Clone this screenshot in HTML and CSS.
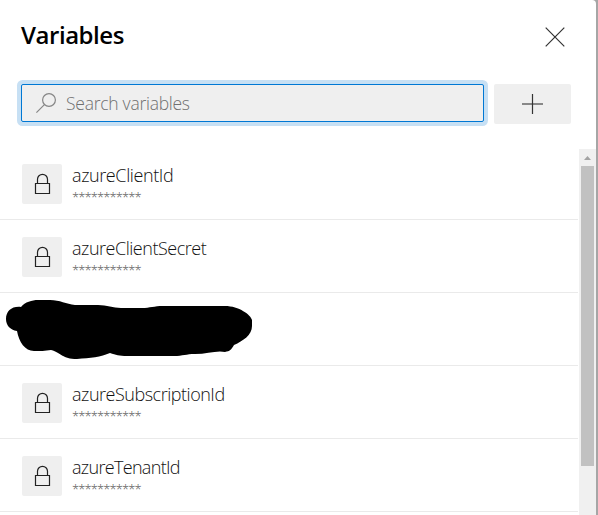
FILE: index.html
```html
<!DOCTYPE html>
<html lang="en">
<head>
<meta charset="utf-8">
<title>Variables</title>
<link rel="stylesheet" href="styles.css">
</head>
<body>
<svg class="sprite" width="0" height="0">
  <symbol id="lock" viewBox="0 0 40 40"><path d="M13.5 19.5h14v10h-14zM15.5 19.5v-4.2a5 5 0 0 1 10 0v4.2"/></symbol>
</svg>
<main class="panel">
  <header class="header">
    <h1 class="title"><span>Variables</span></h1>
    <svg class="close" width="20" height="20" viewBox="0 0 20 20"><path d="M.7.7l18.6 18.6M19.3.7L.7 19.3"/></svg>
  </header>
  <div class="toolbar">
    <div class="search">
      <svg width="20" height="20" viewBox="0 0 20 20"><circle cx="13" cy="7" r="6.4"/><path d="M8.4 11.6L.4 19.6"/></svg>
      <span class="placeholder">Search variables</span>
    </div>
    <div class="add"><svg width="21" height="20" viewBox="0 0 21 20"><path class="across" d="M0 10h21"/><path d="M10.5 0v20"/></svg></div>
  </div>
  <section class="content">
    <ul class="list">
      <li class="row"><div class="icon"><svg width="40" height="40"><use href="#lock"/></svg></div><div class="text"><div class="name">azureClientId</div><div class="mask">***********</div></div></li>
      <li class="row"><div class="icon"><svg width="40" height="40"><use href="#lock"/></svg></div><div class="text"><div class="name snug">azureClientSecret</div><div class="mask">***********</div></div></li>
      <li class="row redacted"><svg width="260" height="72" viewBox="0 293 260 72"><path d="M21 307C25 302 32 300 38 300H50C60 300 66 304 75 305H98C107 305 113 308 121 308H142C150 308 154 306 163 306H225C239 306 251 315 252 320V326C252 335 243 341 234 345C231 350 230 351 225 352C217 350 207 354 195 354C186 354 183 356 174 356H127C119 356 116 355 110 353C101 357 90 358 77 359C62 359 62 353 51 350C45 351 40 351 34 351C25 351 19 342 17 331C10 330 6 325 6 319C6 311 12 306 21 307Z"/></svg></li>
      <li class="row"><div class="icon"><svg width="40" height="40"><use href="#lock"/></svg></div><div class="text"><div class="name snug">azureSubscriptionId</div><div class="mask">***********</div></div></li>
      <li class="row"><div class="icon"><svg width="40" height="40"><use href="#lock"/></svg></div><div class="text"><div class="name tight">azureTenantId</div><div class="mask">***********</div></div></li>
    </ul>
    <div class="scrollbar"><svg class="arrow" width="7" height="4" viewBox="0 0 7 4"><path d="M0 4L3.5 0L7 4z"/></svg><div class="thumb"></div></div>
  </section>
</main>
</body>
</html>
```
FILE: styles.css
```css
* { box-sizing: border-box; }
body {
  margin: 0;
  height: 515px;
  overflow: hidden;
  background: #a6a6a6;
  font-family: "Open Sans", "Noto Sans", sans-serif;
}
svg { display: block; fill: none; stroke: #333; stroke-width: 1.2; }
.sprite { display: none; }
.panel {
  width: 596px;
  height: 515px;
  background: #fff;
  border-top-right-radius: 4px;
  overflow: hidden;
}
.header {
  display: flex;
  justify-content: space-between;
  height: 84px;
  padding: 18px 31px 0 21px;
}
.title {
  margin: 0;
  font-size: 24px;
  line-height: 34px;
  font-weight: 550;
  letter-spacing: -.45px;
  color: #000;
}
.close { margin-top: 9px; }
.toolbar { display: flex; gap: 10px; height: 63px; padding-left: 21px; }
.search {
  display: flex;
  align-items: center;
  gap: 10px;
  width: 463px;
  height: 38px;
  padding-left: 14px;
  border: 1px solid #0078d4;
  border-radius: 2px;
  background: #efefef;
  box-shadow: 0 0 0 4px #c7e0f4;
}
.search svg { stroke: #858585; }
.placeholder {
  font-size: 17.5px;
  line-height: 24px;
  font-weight: 350;
  letter-spacing: -.26px;
  color: #707070;
}
.add {
  display: flex;
  align-items: center;
  justify-content: center;
  width: 77px;
  height: 40px;
  border-radius: 2px;
  background: #efefef;
}
.add .across { stroke: #888; stroke-width: 2; }
.content { display: flex; gap: 1px; height: 368px; }
.list { width: 578px; margin: 0; padding: 0; list-style: none; }
.row {
  display: flex;
  gap: 10px;
  height: 73px;
  padding: 17px 0 0 22px;
  border-bottom: 1px solid #eaeaea;
}
.icon { width: 40px; height: 40px; border-radius: 2px; background: #efefef; }
.icon svg { stroke: #222; }
.name {
  height: 24px;
  font-size: 18px;
  line-height: 22px;
  font-weight: 330;
  letter-spacing: -.4px;
  white-space: nowrap;
  color: #111;
}
.name.snug { letter-spacing: -.48px; }
.name.tight { letter-spacing: -.68px; }
.mask {
  font-size: 13px;
  line-height: 19px;
  font-weight: 300;
  letter-spacing: -.92px;
  color: #555;
}
.redacted { padding: 0; }
.redacted svg { fill: #000; stroke: none; }
.scrollbar {
  width: 17px;
  height: 366px;
  margin-top: 2px;
  padding: 7px 2px 0;
  background: #f0f0f0;
}
.arrow { margin: 0 auto; fill: #a3a3a3; stroke: none; }
.thumb { width: 13px; height: 300px; margin-top: 6px; background: #c1c1c1; }
```
